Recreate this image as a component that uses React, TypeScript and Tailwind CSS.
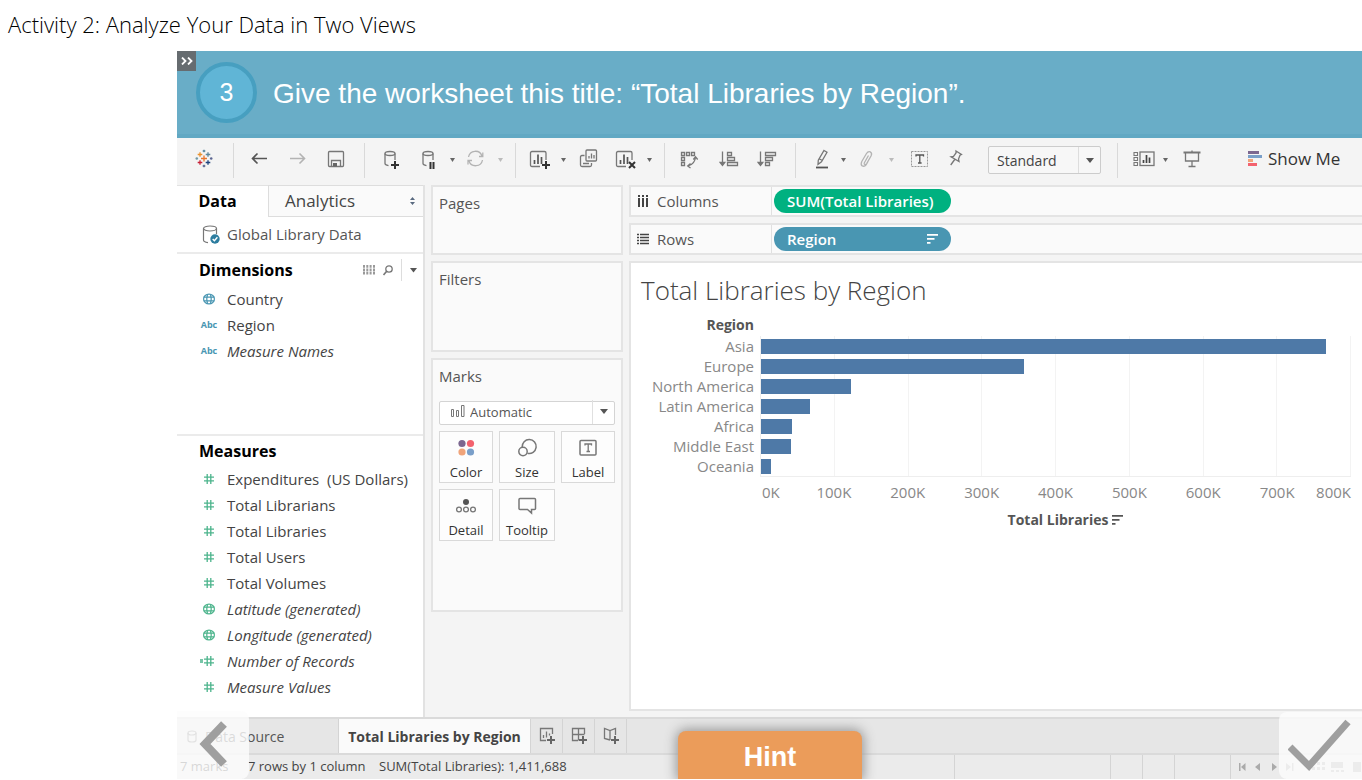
import { ReactNode } from "react";

const dimensions = [
  { name: "Country", icon: "globe", italic: false },
  { name: "Region", icon: "abc", italic: false },
  { name: "Measure Names", icon: "abc", italic: true },
];

const measures = [
  { name: "Expenditures  (US Dollars)", icon: "hash", italic: false },
  { name: "Total Librarians", icon: "hash", italic: false },
  { name: "Total Libraries", icon: "hash", italic: false },
  { name: "Total Users", icon: "hash", italic: false },
  { name: "Total Volumes", icon: "hash", italic: false },
  { name: "Latitude (generated)", icon: "globe", italic: true },
  { name: "Longitude (generated)", icon: "globe", italic: true },
  { name: "Number of Records", icon: "calc", italic: true },
  { name: "Measure Values", icon: "hash", italic: true },
];

// values in thousands of libraries
const regions = [
  { name: "Asia", value: 766 },
  { name: "Europe", value: 357 },
  { name: "North America", value: 122 },
  { name: "Latin America", value: 67 },
  { name: "Africa", value: 42 },
  { name: "Middle East", value: 41 },
  { name: "Oceania", value: 14 },
];
const AXIS_MAX = 800;

function Icon({ children, size = 24 }: { children: ReactNode; size?: number }) {
  return (
    <svg
      width={size}
      height={size}
      viewBox={`0 0 ${size} ${size}`}
      fill="none"
      stroke="#777"
      strokeWidth="1.3"
      className="shrink-0"
      aria-hidden="true"
    >
      {children}
    </svg>
  );
}

function ToolButton({
  label,
  className = "",
  children,
}: {
  label: string;
  className?: string;
  children: ReactNode;
}) {
  return (
    <button aria-label={label} className={`size-6 shrink-0 ${className}`}>
      <Icon>{children}</Icon>
    </button>
  );
}

function Caret({ className = "", faded = false }: { className?: string; faded?: boolean }) {
  return (
    <button aria-label="More options" className={`flex w-2.5 shrink-0 justify-center ${className}`}>
      <svg width="5" height="4" viewBox="0 0 5 4" fill={faded ? "#bbb" : "#666"}>
        <path d="M0 0h5L2.500 4z" />
      </svg>
    </button>
  );
}

function Divider({ className = "" }: { className?: string }) {
  return <div className={`h-[35px] w-px shrink-0 bg-[#d9d9d9] ${className}`} />;
}

function SortIcon({ color }: { color: string }) {
  return (
    <svg width="11" height="10" viewBox="0 0 11 10" fill={color} aria-hidden="true">
      <path d="M0 0h11v1.700H0zM0 4h7.500v1.700H0zM0 8h3.500v1.700H0z" />
    </svg>
  );
}

function Plus({ x, y, color = "#333" }: { x: number; y: number; color?: string }) {
  return <path d={`M${x - 4} ${y}h8M${x} ${y - 4}v8`} stroke={color} strokeWidth="2" />;
}

function Plusses() {
  // centre x, centre y, arm length, colour
  const marks: [number, number, number, string][] = [
    [12, 10.5, 3, "#e8762c"],
    [8, 6.5, 2.3, "#eb9129"],
    [16, 6.5, 2.3, "#5b879b"],
    [8, 14.5, 2.3, "#c72037"],
    [16, 14.5, 2.3, "#1f447e"],
    [12, 3, 1.3, "#59879b"],
    [12, 18, 1.3, "#5c6692"],
    [4.8, 10.5, 1.3, "#7199a6"],
    [19.2, 10.5, 1.3, "#5c6692"],
  ];
  return (
    <>
      {marks.map(([x, y, r, color], i) => (
        <path key={i} d={`M${x - r} ${y}h${r * 2}M${x} ${y - r}v${r * 2}`} stroke={color} />
      ))}
    </>
  );
}

function Toolbar() {
  return (
    <div className="flex h-[47px] shrink-0 items-center bg-[#f4f4f4] pb-[3px] pl-[15px]">
      <ToolButton label="Start page">
        <Plusses />
      </ToolButton>
      <Divider className="ml-[17px]" />
      <ToolButton label="Undo" className="ml-3.5">
        <path d="M19 10.500H4M9.500 5.500l-5 5 5 5" stroke="#555" strokeWidth="1.600" />
      </ToolButton>
      <ToolButton label="Redo" className="ml-3.5">
        <path d="M4 10.500h15M13.500 5.500l5 5-5 5" stroke="#b3b3b3" strokeWidth="1.600" />
      </ToolButton>
      <ToolButton label="Save" className="ml-3.5">
        <rect x="4.500" y="3.500" width="15" height="15" rx="1" />
        <path d="M7.500 18.500v-6h9v6" />
        <path d="M9 15h4v3.500H9z" fill="#666" stroke="none" />
      </ToolButton>
      <Divider className="ml-4" />
      <ToolButton label="New data source" className="ml-3.5">
        <ellipse cx="11" cy="5.500" rx="5" ry="2" />
        <path d="M6 5.500V15.500q0 1.500 3.500 2.200M16 5.500V12" />
        <Plus x={16} y={17} />
      </ToolButton>
      <ToolButton label="Pause auto updates" className="ml-3.5">
        <ellipse cx="11" cy="5.500" rx="5" ry="2" />
        <path d="M6 5.500V15.500q0 1.500 3.500 2.200M16 5.500V12" />
        <path d="M13.500 14v7M16.500 14v7" stroke="#333" strokeWidth="2" />
      </ToolButton>
      <Caret className="ml-1.5" />
      <ToolButton label="Run update" className="ml-1.5">
        <path
          d="M5.500 9a7 7 0 0 1 13.500-1M19.500 12a7 7 0 0 1-13.500 1M19.800 4.500V8.500H16M5 16.500V12.500H9"
          stroke="#b3b3b3"
        />
      </ToolButton>
      <Caret className="ml-2" faded />
      <Divider className="ml-2.5" />
      <ToolButton label="New worksheet" className="ml-3">
        <path d="M12 18.500H4q-1.500 0-1.500-1.500V5q0-1.500 1.500-1.500H16.500q1.500 0 1.500 1.500V12" />
        <path d="M6.500 12v4M10 6.500v9.500M13.500 9v7" stroke="#555" strokeWidth="1.700" />
        <Plus x={18} y={17} />
      </ToolButton>
      <Caret className="ml-1.5" />
      <ToolButton label="Duplicate" className="ml-2">
        <rect x="10" y="2" width="10.500" height="11" rx="1" />
        <path d="M8.500 7.500H6q-1.500 0-1.500 1.500v8q0 1.500 1.500 1.500h8q1.500 0 1.500-1.500v-2M7 15.500h6" />
        <path d="M13 8v2.500M15.500 5.500v5M18 7v3.500" />
      </ToolButton>
      <ToolButton label="Clear sheet" className="ml-3.5">
        <path d="M12 18.500H4q-1.500 0-1.500-1.500V5q0-1.500 1.500-1.500H16.500q1.500 0 1.500 1.500V12" />
        <path d="M6.500 12v4M10 6.500v9.500M13.500 9v7" stroke="#555" strokeWidth="1.700" />
        <path d="M15 14l6 6M21 14l-6 6" stroke="#333" strokeWidth="2" />
      </ToolButton>
      <Caret className="ml-1.5" />
      <Divider className="ml-2.5" />
      <ToolButton label="Swap rows and columns" className="ml-3">
        <path d="M4.500 4.500h3v3h-3zM9.500 4.500h3v3h-3zM14.500 4.500h3v3h-3zM4.500 9.500h3v3h-3zM4.500 14.500h3v3h-3z" />
        <path d="M18.500 9q-.5 7-7.500 9M16.300 11.500l2.200-2.700 2.200 2.700M13.500 15.500l-2.800 2.500 2.800 2" />
      </ToolButton>
      <ToolButton label="Sort ascending" className="ml-4">
        <path d="M5.500 3.500v13M3.200 14.500l2.300 3 2.300-3z" fill="#666" />
        <path d="M10.500 4.500h4v3h-4zM10.500 9.500h7v3h-7zM10.500 14.500h10v3h-10z" />
      </ToolButton>
      <ToolButton label="Sort descending" className="ml-3.5">
        <path d="M5.500 3.500v13M3.200 14.500l2.300 3 2.300-3z" fill="#666" />
        <path d="M10.500 4.500h10v3h-10zM10.500 9.500h7v3h-7zM10.500 14.500h4v3h-4z" />
      </ToolButton>
      <Divider className="ml-4" />
      <ToolButton label="Highlight" className="ml-3.5">
        <path d="M14 2.500l3 1.800-5.500 9.500-3.500 2.500.3-4.200zM9.500 11l3 1.500" />
        <path d="M6 19.500h12" stroke="#555" strokeWidth="1.800" />
      </ToolButton>
      <Caret className="ml-1" />
      <ToolButton label="Group members" className="ml-1.5">
        <path
          d="M14.500 7.500l-4 7q-.8 1.500.3 2 1 .3 2-1.200l4.200-7.300q1.500-3-.8-4.200-2.200-.8-3.700 1.700l-4.700 8q-1.500 3.200.5 4.500 2.200 1 4-1.500l1.500-2.500"
          stroke="#b3b3b3"
        />
      </ToolButton>
      <Caret className="ml-2" faded />
      <ToolButton label="Show mark labels" className="ml-3">
        <rect x="3.500" y="3.500" width="16" height="15" strokeDasharray="2 1" stroke="#999" strokeWidth="1" />
        <path d="M8 8.500V7h7.500v1.500M11.800 7v8M10 15h3.600" stroke="#555" />
      </ToolButton>
      <ToolButton label="Fix axes" className="ml-3">
        <path d="M12 3l5.500 3.500-1.500.8-1.500 3.700.5 2.500-8-4.700 2.500-.5 2.500-3.300zM10.700 11.500l-4 5.500" />
      </ToolButton>
      <div className="relative ml-5 shrink-0">
        <select
          aria-label="Fit"
          className="h-7 w-[113px] appearance-none rounded-xs border border-[#ccc] bg-[#f7f7f7] pl-2 text-[14px] text-[#444]"
        >
          <option>Standard</option>
          <option>Fit Width</option>
          <option>Fit Height</option>
          <option>Entire View</option>
        </select>
        <span className="pointer-events-none absolute inset-y-px right-px flex w-[22px] items-center justify-center border-l border-[#ddd]">
          <svg width="8" height="5" viewBox="0 0 8 5" fill="#555">
            <path d="M0 0h8L4 5z" />
          </svg>
        </span>
      </div>
      <Divider className="ml-4" />
      <ToolButton label="Show or hide cards" className="ml-3.5">
        <path d="M2 4.500h3.500v3H2zM2 9.500h3.500v3H2zM2 14.500h3.500v3H2z" strokeWidth="1.100" />
        <rect x="8" y="4" width="14" height="13.500" />
        <path d="M11.500 12v3M14.500 7v8M17.500 9.500v5.500" stroke="#444" strokeWidth="1.700" />
      </ToolButton>
      <Caret className="ml-1" />
      <ToolButton label="Presentation mode" className="ml-2.5">
        <path d="M3.500 4.500h17" strokeWidth="2" />
        <path d="M5.500 4.500v8.500h13v-8.500M12 13v5.500M8.500 18.500h7M12 2.500v2" />
      </ToolButton>
      <button className="ml-11 flex shrink-0 items-center gap-1.5 pb-0.5 text-[17px] text-[#333]">
        <svg width="14" height="16" viewBox="0 0 14 16" aria-hidden="true">
          <path d="M0 0h11v3H0z" fill="#7c6790" />
          <path d="M0 4h14v3H0z" fill="#7a9fc9" />
          <path d="M0 8h5v3H0z" fill="#f0a47a" />
          <path d="M0 12h9v3H0z" fill="#f3626e" />
        </svg>
        Show Me
      </button>
    </div>
  );
}

function FieldIcon({ icon, color }: { icon: string; color: string }) {
  if (icon === "abc") {
    return <span className="text-[9px] font-bold text-[#4996b2]">Abc</span>;
  }
  if (icon === "globe") {
    return (
      <svg width="12" height="12" viewBox="0 0 12 12" fill="none" stroke={color} strokeWidth="1.2">
        <ellipse cx="6" cy="6" rx="5.400" ry="4.900" />
        <path d="M.6 4.200h10.800M.6 7.800h10.800M4.500 1.200q-1.500 4.800 0 9.600M7.500 1.200q1.500 4.800 0 9.600" />
      </svg>
    );
  }
  return (
    <svg width="18" height="12" viewBox="0 0 18 12" fill="none" stroke={color} strokeWidth="1.3">
      <path d="M4 4.200h10M4 7.800h10M7.200 1v10M10.800 1v10" />
      {icon === "calc" && <path d="M0 5h3M0 7h3" />}
    </svg>
  );
}

function FieldList({
  fields,
  color,
}: {
  fields: { name: string; icon: string; italic: boolean }[];
  color: string;
}) {
  return (
    <ul>
      {fields.map((field) => (
        <li key={field.name} className="flex h-[26px] items-center gap-2 pl-[22px]">
          <span className="flex w-5 justify-center">
            <FieldIcon icon={field.icon} color={color} />
          </span>
          <span className={`text-[15px] leading-5 whitespace-pre text-[#444] ${field.italic ? "italic" : ""}`}>
            {field.name}
          </span>
        </li>
      ))}
    </ul>
  );
}

function DataPane() {
  return (
    <aside className="flex w-[248px] shrink-0 flex-col border-r-2 border-[#e2e2e2] bg-white pb-[17px]">
      <div className="flex h-8" role="tablist">
        <button role="tab" aria-selected="true" className="w-[91px] border-t border-[#e2e2e2] pr-2.5 pb-0.5 text-[16px] font-bold text-black">
          Data
        </button>
        <button
          role="tab"
          aria-selected="false"
          className="flex flex-1 items-center justify-between border border-r-0 border-[#ddd] bg-[#fafafa] pr-2 pl-4 text-[17px] text-[#444]"
        >
          Analytics
          <svg width="5" height="8" viewBox="0 0 5 8" fill="#5a6a80">
            <path d="M0 3l2.500-3L5 3zM0 5l2.500 3L5 5z" />
          </svg>
        </button>
      </div>
      <div className="flex h-[37px] items-center gap-1 border-b-2 border-[#ebebeb] pl-6 text-[15px] text-[#555]">
        <svg width="22" height="22" viewBox="0 0 22 22" fill="none" stroke="#777" strokeWidth="1.2">
          <ellipse cx="9" cy="4.500" rx="6.500" ry="2.500" />
          <path d="M2.500 4.500V16q0 2 4.500 2.700M15.500 4.500V10" />
          <circle cx="14" cy="15" r="4.700" fill="#2d7d9f" stroke="none" />
          <path d="M11.700 15l1.700 1.800 3-3.500" stroke="#fff" strokeWidth="1.400" />
        </svg>
        Global Library Data
      </div>
      <section className="h-[182px] border-b-2 border-[#ebebeb]">
        <div className="flex h-8 items-center pr-1.5 pl-[22px]">
          <h2 className="flex-1 text-[16px] font-bold text-black">Dimensions</h2>
          <button aria-label="View data" className="mr-2">
            <svg width="12" height="10" viewBox="0 0 12 10" stroke="#999" strokeWidth="2" strokeDasharray="2.8 .6">
              <path d="M1 0v10M4.300 0v10M7.600 0v10M11 0v10" />
            </svg>
          </button>
          <button aria-label="Find field" className="mr-2">
            <svg width="10" height="11" viewBox="0 0 10 11" fill="none" stroke="#777" strokeWidth="1.3">
              <circle cx="6" cy="4" r="3.200" />
              <path d="M3.500 6.500L.5 10" strokeWidth="1.600" />
            </svg>
          </button>
          <div className="h-[22px] w-px bg-[#ddd]" />
          <button aria-label="Pane menu" className="ml-2">
            <svg width="7" height="5" viewBox="0 0 7 5" fill="#555">
              <path d="M0 0h7L3.500 4.500z" />
            </svg>
          </button>
        </div>
        <FieldList fields={dimensions} color="#4996b2" />
      </section>
      <section>
        <h2 className="flex h-[30px] items-center pl-[22px] text-[16px] font-bold text-black">Measures</h2>
        <FieldList fields={measures} color="#4cb48c" />
      </section>
    </aside>
  );
}

function Card({ title, className = "", children }: { title: string; className?: string; children?: ReactNode }) {
  return (
    <section className={`border-2 border-[#e4e4e4] bg-[#fafafa] px-1.5 pt-1.5 ${className}`}>
      <h3 className="text-[15px] leading-5 text-[#555]">{title}</h3>
      {children}
    </section>
  );
}

function MarkButton({ label, children }: { label: string; children: ReactNode }) {
  return (
    <button className="flex h-[52px] flex-col items-center justify-between border border-[#d9d9d9] bg-[#fdfdfd] pt-1 pb-0.5 text-[13px] leading-4 text-[#333]">
      <Icon>{children}</Icon>
      {label}
    </button>
  );
}

function ShelfCards() {
  return (
    <div className="flex w-48 shrink-0 flex-col gap-1.5">
      <Card title="Pages" className="h-[70px]" />
      <Card title="Filters" className="h-[91px]" />
      <Card title="Marks" className="h-[254px]">
        <div className="relative mt-[13px]">
          <select
            aria-label="Mark type"
            className="h-6 w-full appearance-none rounded-xs border border-[#d4d4d4] bg-white pl-[30px] text-[13px] text-[#555]"
          >
            <option>Automatic</option>
            <option>Bar</option>
            <option>Line</option>
          </select>
          <svg
            className="pointer-events-none absolute top-1.5 left-3"
            width="14"
            height="13"
            viewBox="0 0 14 13"
            fill="none"
            stroke="#777"
          >
            <path d="M.5 4.500h2v7h-2zM5.500 5.500h2v6h-2zM10.500.5h2.500v11h-2.500z" />
          </svg>
          <span className="pointer-events-none absolute inset-y-px right-px flex w-[22px] items-center justify-center border-l border-[#e0e0e0]">
            <svg width="8" height="5" viewBox="0 0 8 5" fill="#555">
              <path d="M0 0h8L4 5z" />
            </svg>
          </span>
        </div>
        <div className="mt-1.5 grid grid-cols-[54px_56px_54px] gap-1.5">
          <MarkButton label="Color">
            <g stroke="none">
              <circle cx="8" cy="7.500" r="3.600" fill="#7c6790" />
              <circle cx="16.500" cy="7.500" r="3.600" fill="#f3626e" />
              <circle cx="8" cy="16" r="3.600" fill="#f0a47a" />
              <circle cx="16.500" cy="16" r="3.600" fill="#7a9fc9" />
            </g>
          </MarkButton>
          <MarkButton label="Size">
            <path d="M7.200 11A7 7 0 1 1 12.500 17.300" strokeWidth="1.500" />
            <circle cx="8" cy="15.500" r="4.200" strokeWidth="1.500" />
          </MarkButton>
          <MarkButton label="Label">
            <rect x="4" y="4.500" width="16" height="14.500" rx="1" strokeWidth="1.500" />
            <path d="M9 9.500V8h6.500v1.500M12.200 8v7.500M10.500 15.500h3.500" />
          </MarkButton>
          <MarkButton label="Detail">
            <circle cx="12" cy="8" r="3" fill="#555" stroke="none" />
            <circle cx="5" cy="15.500" r="2.400" />
            <circle cx="12" cy="15.500" r="2.400" />
            <circle cx="19" cy="15.500" r="2.400" />
          </MarkButton>
          <MarkButton label="Tooltip">
            <path d="M5 4.500h14.500q1 0 1 1v9q0 1-1 1h-3v3.500l-4-3.500H5q-1 0-1-1v-9q0-1 1-1z" strokeWidth="1.500" />
          </MarkButton>
        </div>
      </Card>
    </div>
  );
}

function Shelf({ label, icon, children }: { label: string; icon: ReactNode; children: ReactNode }) {
  return (
    <div className="flex h-8 border-2 border-r-0 border-[#e4e4e4] bg-[#fafafa]">
      <div className="flex w-[141px] items-center gap-2 border-r border-[#e0e0e0] pl-1.5 text-[15px] text-[#555]">
        {icon}
        {label}
      </div>
      <div className="flex flex-1 items-center pl-0.5">{children}</div>
    </div>
  );
}

function Chart() {
  return (
    <div className="flex-1 border-2 border-r-0 border-[#e4e4e4] bg-white pt-[11px] pr-[11px] pl-2.5">
      <h1 className="text-[26px] leading-8 font-light text-[#444]">Total Libraries by Region</h1>
      <div className="mt-2 w-[113px] text-right text-[14px] leading-[22px] font-bold text-[#555]">Region</div>
      <div className="flex">
        <div className="w-[119px] shrink-0 pr-1.5">
          {regions.map((region) => (
            <div key={region.name} className="text-right text-[15px] leading-5 text-[#888]">
              {region.name}
            </div>
          ))}
        </div>
        <div className="min-w-0 flex-1">
          <div className="relative border-b border-l border-[#eee]">
            <div className="absolute inset-0 grid grid-cols-8">
              {Array.from({ length: 8 }, (_, i) => (
                <div key={i} className="border-r border-[#f3f3f3]" />
              ))}
            </div>
            {regions.map((region) => (
              <div key={region.name} className="relative flex h-5 items-center">
                <div
                  className="h-[15px] bg-[#4e79a7]"
                  style={{ width: `${(region.value / AXIS_MAX) * 100}%` }}
                />
              </div>
            ))}
          </div>
          <div className="mt-[5px] flex text-[15px] leading-5 text-[#888]">
            <span className="w-[6.25%] pl-0.5">0K</span>
            {[100, 200, 300, 400, 500, 600, 700].map((tick) => (
              <span key={tick} className="w-[12.5%] text-center">
                {tick}K
              </span>
            ))}
            <span className="flex w-[6.25%] justify-end">800K</span>
          </div>
          <div className="mt-2 flex items-center justify-center gap-1 pl-5 text-[14px] leading-5 font-bold text-[#555]">
            Total Libraries
            <SortIcon color="#555" />
          </div>
        </div>
      </div>
    </div>
  );
}

function SheetTabs() {
  return (
    <div className="flex h-[38px] shrink-0 border-y-2 border-[#dadada] bg-[#e6e6e6]">
      <button className="flex w-[161px] items-center gap-2 pl-2.5 text-[14px] text-[#555]">
        <svg width="10" height="13" viewBox="0 0 10 13" fill="none" stroke="#777" strokeWidth="1.2">
          <ellipse cx="5" cy="3" rx="4" ry="2" />
          <path d="M1 3v7q0 2 4 2t4-2V3" />
        </svg>
        Data Source
      </button>
      <button className="w-[193px] border-x border-[#d4d4d4] bg-[#fafafa] text-[14px] font-bold text-[#444]">
        Total Libraries by Region
      </button>
      <button aria-label="New worksheet" className="flex w-8 items-center justify-center border-r border-[#d4d4d4]">
        <Icon size={20}>
          <path d="M9 14.500H3.500v-12h12V8" />
          <path d="M6.500 9v3M9.500 5.500v6M12.500 7.500v2" />
          <Plus x={14} y={14} color="#666" />
        </Icon>
      </button>
      <button aria-label="New dashboard" className="flex w-8 items-center justify-center border-r border-[#d4d4d4]">
        <Icon size={20}>
          <path d="M9 14.500H3.500v-12h12V8M3.500 8.500h12M9.500 2.500v12" />
          <Plus x={14} y={14} color="#666" />
        </Icon>
      </button>
      <button aria-label="New story" className="flex w-8 items-center justify-center border-r border-[#d4d4d4]">
        <Icon size={20}>
          <path d="M9 14l-5.500-1.500v-10L9 4.500l5.500-2V9M9 4.500V14" />
          <Plus x={14} y={14} color="#666" />
        </Icon>
      </button>
    </div>
  );
}

function StatusBar() {
  return (
    <div className="flex h-6 shrink-0 items-center bg-[#ebebeb] pl-[3px] text-[13px] text-[#444]">
      <span className="w-[68px]">7 marks</span>
      <span className="w-[131px]">7 rows by 1 column</span>
      <span className="flex-1">SUM(Total Libraries): 1,411,688</span>
      <div className="flex h-full">
        <span className="w-[156px] border-l border-[#d4d4d4]" />
        <span className="w-8 border-l border-[#d4d4d4]" />
        <span className="w-8 border-l border-[#d4d4d4]" />
        <span className="w-14 border-l border-[#d4d4d4]" />
        <div className="flex w-[132px] items-center border-l border-[#d4d4d4] pl-2">
          <svg width="122" height="12" viewBox="0 0 122 12" fill="#aaa" aria-hidden="true">
            <path d="M0 2h1.500v8H0zM6.500 2v8L2 6zM21 2v8l-5-4zM33 2v8l5-4zM47 2v8l5-4zM53 2h1.500v8H53z" />
            <path d="M73 1h3v3h-3zM78 1h3v3h-3zM83 1h3v3h-3zM73 6h3v3h-3zM78 6h3v3h-3zM83 6h3v3h-3z" />
            <path d="M92 1h12v6H92zM92 9h3v2h-3zM97 9h3v2h-3zM102 9h3v2h-3zM114 1h8v10h-8z" />
          </svg>
        </div>
      </div>
    </div>
  );
}

export default function App() {
  return (
    <div className="min-h-screen bg-white font-['Open_Sans','Noto_Sans',sans-serif]">
      <p className="px-2 pt-2 text-[22px] leading-8 font-light text-black">
        Activity 2: Analyze Your Data in Two Views
      </p>
      <main className="relative mt-[11px] ml-[177px] flex flex-col overflow-hidden bg-[#f4f4f4]">
        <header className="relative flex h-[87px] items-center gap-4 border-b-4 border-[#61a8c3] bg-[#69adc7] pl-[19px] font-['Liberation_Sans',Arial,sans-serif] text-white">
          <button
            aria-label="Expand"
            className="absolute top-0 left-0 flex h-5 w-[19px] items-center justify-center bg-[#666c70]"
          >
            <svg width="12" height="8" viewBox="0 0 12 8" fill="none" stroke="#fff" strokeWidth="1.8">
              <path d="M1 .5L4.500 4 1 7.500M7 .5L10.500 4 7 7.500" />
            </svg>
          </button>
          <div className="flex size-[61px] shrink-0 items-center justify-center rounded-full border-4 border-[#479fc0] bg-[#60b5d6] text-[25px]">
            3
          </div>
          <p className="pt-0.5 text-[28px]">Give the worksheet this title: “Total Libraries by Region”.</p>
        </header>
        <Toolbar />
        <div className="flex">
          <DataPane />
          <div className="flex min-w-0 flex-1 gap-1.5 pb-1.5 pl-1.5">
            <ShelfCards />
            <div className="flex min-w-0 flex-1 flex-col gap-1.5">
              <Shelf
                label="Columns"
                icon={
                  <svg width="12" height="12" viewBox="0 0 12 12" stroke="#444" strokeWidth="2" strokeDasharray="2 1 9">
                    <path d="M2 0v12M6 0v12M10 0v12" />
                  </svg>
                }
              >
                <button className="flex h-6 w-[177px] items-center rounded-full bg-[#00b180] px-[13px] text-[15px] font-semibold text-white">
                  SUM(Total Libraries)
                </button>
              </Shelf>
              <Shelf
                label="Rows"
                icon={
                  <svg width="12" height="12" viewBox="0 0 12 12" stroke="#444" strokeWidth="1.6" strokeDasharray="2 1 9">
                    <path d="M0 1.500h12M0 4.500h12M0 7.500h12M0 10.500h12" />
                  </svg>
                }
              >
                <button className="flex h-6 w-[177px] items-center justify-between rounded-full bg-[#4996b2] px-[13px] text-[15px] font-semibold text-white">
                  Region
                  <SortIcon color="#fff" />
                </button>
              </Shelf>
              <Chart />
            </div>
          </div>
        </div>
        <SheetTabs />
        <StatusBar />
        <button
          aria-label="Previous"
          className="absolute bottom-0 left-0 flex h-[68px] w-[72px] items-center justify-center rounded-r-lg bg-[#fdfdfd]/80"
        >
          <svg width="30" height="48" viewBox="0 0 30 48" fill="none" stroke="#9f9f9f" strokeWidth="8">
            <path d="M26 3L7 23l19 20" />
          </svg>
        </button>
        <button className="absolute bottom-0 left-[501px] h-[48px] w-[184px] rounded-t-lg bg-[#eb9c5a] pt-1 font-['Liberation_Sans',Arial,sans-serif] text-[27px] font-bold text-white shadow-[0_0_12px_2px_#999]">
          Hint
        </button>
        <button
          aria-label="Done"
          className="absolute right-0 bottom-0 flex h-[67px] w-[83px] items-center justify-center rounded-l-lg bg-[#fdfdfd]/80"
        >
          <svg width="66" height="54" viewBox="0 0 66 54" fill="none" stroke="#9f9f9f" strokeWidth="7">
            <path d="M2 28l19 19L60 3" />
          </svg>
        </button>
      </main>
    </div>
  );
}
